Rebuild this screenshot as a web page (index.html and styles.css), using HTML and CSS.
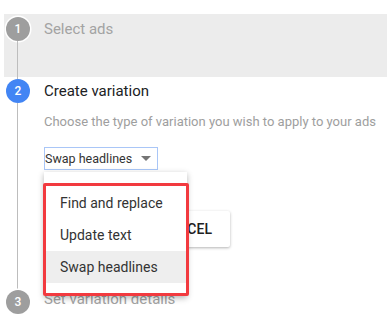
FILE: index.html
```html
<!DOCTYPE html>
<html lang="en">
<head>
    <meta charset="UTF-8">
    <title>Create variation</title>
    <link rel="stylesheet" href="styles.css">
</head>
<body>
    <div class="stepper">
        <div class="step step-done">
            <div class="rail">
                <div class="circle circle-grey">1</div>
                <div class="line"></div>
            </div>
            <div class="step-body">
                <div class="step-title muted">Select ads</div>
            </div>
        </div>

        <div class="step step-active">
            <div class="rail">
                <div class="circle circle-blue">2</div>
                <div class="line"></div>
            </div>
            <div class="step-body">
                <div class="step-title">Create variation</div>
                <div class="hint">Choose the type of variation you wish to apply to your ads</div>
                <div class="select">
                    <span class="select-value">Swap headlines</span>
                    <span class="select-arrow"></span>
                </div>
                <div class="actions">
                    <div class="btn btn-apply"></div>
                    <div class="btn">CANCEL</div>
                </div>

                <div class="menu">
                    <div class="menu-item">Find and replace</div>
                    <div class="menu-item">Update text</div>
                    <div class="menu-item selected">Swap headlines</div>
                </div>
                <div class="highlight-box"></div>
            </div>
        </div>

        <div class="step step-next">
            <div class="rail">
                <div class="circle circle-grey">3</div>
            </div>
            <div class="step-body">
                <div class="step-title muted">Set variation details</div>
            </div>
        </div>
    </div>
</body>
</html>
```

FILE: styles.css
```css
body {
    margin: 0;
    font-family: Roboto, 'Liberation Sans', Arial, sans-serif;
    background: #fff;
    color: #212121;
    overflow: hidden;
}
.stepper {
    margin: 14px 0 0 4px;
}
.step {
    display: flex;
}
.step-done {
    background: #ececec;
    height: 63px;
    padding-top: 3px;
    box-sizing: border-box;
}
.step-active {
    padding-top: 2px;
}
.rail {
    width: 28px;
    padding-left: 2px;
    box-sizing: border-box;
    display: flex;
    flex-direction: column;
}
.circle {
    width: 24px;
    height: 24px;
    border-radius: 50%;
    color: #fff;
    font-size: 12px;
    font-weight: 500;
    display: flex;
    align-items: center;
    justify-content: center;
    flex-shrink: 0;
}
.circle-grey {
    background: #9e9e9e;
    box-shadow: 0 0 0 1.5px #fff;
}
.circle-blue {
    background: #4285f4;
}
.line {
    width: 1px;
    margin-left: 11px;
    flex: 1;
    background: #bdbdbd;
}
.step-done .line {
    margin-bottom: -2px;
}
.step-body {
    margin-left: 12px;
    position: relative;
    flex: 1;
}
.step-next .step-body {
    margin-top: -3px;
}
.step-title {
    font-size: 15px;
    line-height: 24px;
    color: #202124;
}
.muted {
    color: #a3a3a3;
}
.hint {
    font-size: 13px;
    line-height: 16px;
    color: #9e9e9e;
    margin-top: 11px;
}
.select {
    width: 114px;
    height: 23px;
    box-sizing: border-box;
    border: 1px solid #a9c6f7;
    margin-top: 17px;
    display: flex;
    align-items: center;
    font-size: 12.5px;
    color: #333;
}
.select-arrow {
    margin-left: 9px;
    width: 0;
    height: 0;
    border-left: 5px solid transparent;
    border-right: 5px solid transparent;
    border-top: 5px solid #757575;
}
.actions {
    display: flex;
    gap: 8px;
    margin-top: 41px;
    margin-bottom: 43px;
    padding-left: 15px;
}
.btn {
    height: 36px;
    line-height: 36px;
    padding: 0 18px;
    border-radius: 2px;
    background: #fff;
    box-shadow: 0 1px 3px rgba(0,0,0,0.3);
    font-size: 14px;
    font-weight: 500;
    color: #212121;
}
.btn-apply {
    width: 38px;
}
.menu {
    position: absolute;
    top: 93px;
    left: 0;
    width: 143px;
    padding: 15px 0 13px;
    background: #fff;
    box-shadow: 0 2px 6px rgba(0,0,0,0.3);
    z-index: 5;
}
.menu-item {
    height: 32px;
    line-height: 32px;
    padding-left: 16px;
    font-size: 14px;
    color: #333;
}
.menu-item.selected {
    background: #eeeeee;
}
.highlight-box {
    position: absolute;
    top: 104px;
    left: -1px;
    width: 146px;
    height: 113px;
    box-sizing: border-box;
    border: 3px solid #f23a3f;
    border-radius: 2px;
    z-index: 6;
}
```
